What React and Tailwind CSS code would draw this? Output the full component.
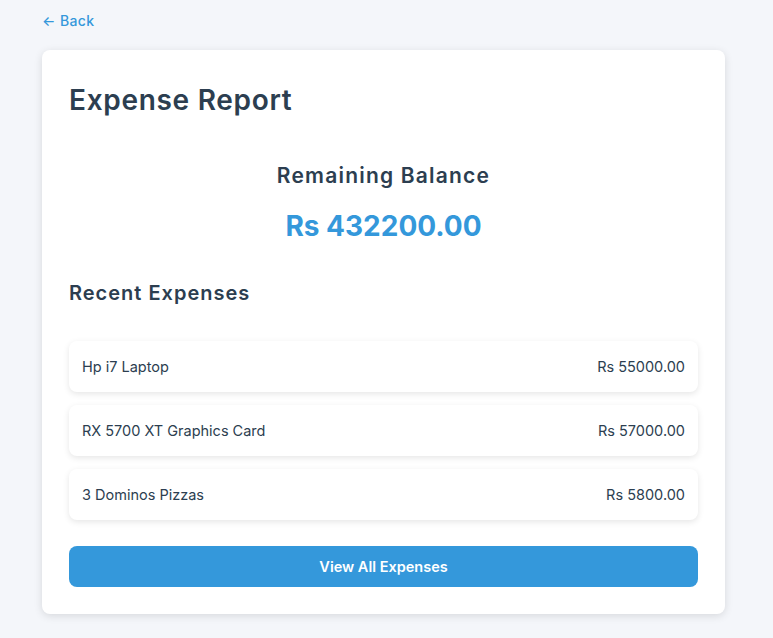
import React from "react";

const expenses = [
  { name: "Hp i7 Laptop", amount: "Rs 55000.00" },
  { name: "RX 5700 XT Graphics Card", amount: "Rs 57000.00" },
  { name: "3 Dominos Pizzas", amount: "Rs 5800.00" },
];

export default function App() {
  return (
    <div
      className="min-h-[638px] w-full bg-[#f4f6fa] text-[#2c3e50]"
      style={{ fontFamily: "Inter, 'Noto Sans', sans-serif" }}
    >
      <div className="pl-[42px] pt-[8px]">
        <a href="#" className="text-[14px] font-medium leading-[18px] tracking-[0.4px] text-[#3498db]">
          ← Back
        </a>
      </div>

      <div className="ml-[42px] mt-[18px] w-[683px] rounded-lg bg-white px-[27px] pb-[27px] pt-[30px] shadow-[0_2px_8px_rgba(0,0,0,0.12)]">
        <h1 className="text-[28px] font-semibold leading-[40px] tracking-[0.7px]">
          Expense Report
        </h1>

        <div className="mt-[41px] flex flex-col items-center">
          <h2 className="text-[21px] font-semibold leading-[30px] tracking-[1.2px]">
            Remaining Balance
          </h2>
          <p className="mt-[18px] text-[28px] font-bold leading-[34px] text-[#3498db]">
            Rs 432200.00
          </p>
        </div>

        <h3 className="mt-[36px] text-[20px] font-semibold leading-[28px] tracking-[1px]">
          Recent Expenses
        </h3>

        <ul className="mt-[34px] flex flex-col gap-[13px]">
          {expenses.map((e) => (
            <li
              key={e.name}
              className="flex h-[51px] items-center justify-between rounded-lg bg-white px-[13px] shadow-[0_2px_6px_rgba(0,0,0,0.1)]"
            >
              <span className="text-[14.5px]">{e.name}</span>
              <span className="text-[14.5px]">{e.amount}</span>
            </li>
          ))}
        </ul>

        <button className="mt-[26px] flex h-[41px] w-full items-center justify-center rounded-lg bg-[#3498db] text-[14.5px] font-semibold text-white">
          View All Expenses
        </button>
      </div>
    </div>
  );
}
